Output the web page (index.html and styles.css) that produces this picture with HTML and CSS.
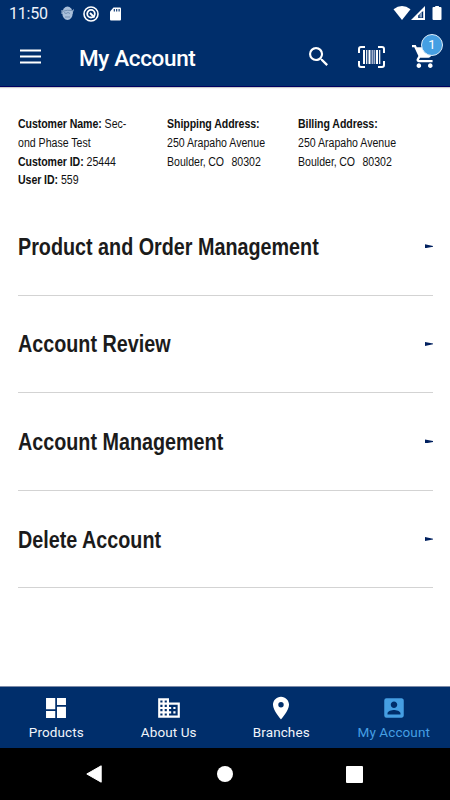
FILE: index.html
```
<!DOCTYPE html>
<html lang="en">
<head>
<meta charset="utf-8">
<title>My Account</title>
<link rel="stylesheet" href="styles.css">
</head>
<body>
<div class="phone">
  <header class="top">
    <div class="status">
      <span class="clock">11:50</span>
      <svg class="robot" viewBox="0 0 13 15"><ellipse cx="6.5" cy="7.3" rx="5.2" ry="6.7" fill="#a9bfda"/><path d="M1 5.5q5-2 11-1M3 6.5l2 1 2-1 2 1M4 11h5" fill="none" stroke="#6583a7" stroke-width=".8"/><path d="M1 4v4M12.5 3.5l-2 5" stroke="#a9bfda"/></svg>
      <svg class="disc" viewBox="0 0 16 16"><circle cx="8" cy="8" r="7" fill="none" stroke="#fff" stroke-width="1.6"/><circle cx="8" cy="7.7" r="3.8" fill="none" stroke="#fff" stroke-width="1.8"/><path d="M7 7l4.5 4.5" stroke="#fff" stroke-width="1.8"/></svg>
      <svg class="sd" viewBox="0 0 12 14"><path d="M4 .5h6.5q1 0 1 1v11q0 1-1 1h-9q-1 0-1-1V4.5z" fill="#fff"/><path d="M4.8 2v2.5M7.2 2v2.5M9.6 2v2.5" stroke="#002e6b" stroke-width="1.1"/></svg>
      <svg class="signals" viewBox="0 0 52 16"><path d="M.5 4.3Q9-2.2 17.5 4.3L9 15z" fill="#fff"/><path d="M32 1v14H18z" fill="#fff"/><path d="M30.2 6v7h-5V10.5z" fill="#002e6b"/><path d="M26.5 12.5V9.5l2.5-3v6z" fill="#849bb9"/><path d="M42.500 1h3q.5 0 .5.7V2h1.500q1 0 1 1v11q0 1-1 1h-7q-1 0-1-1V3q0-1 1-1H42z" fill="#fff"/></svg>
    </div>
    <div class="bar">
      <svg class="menu" viewBox="0 0 21 15"><path d="M0 1.500h21M0 7.500h21M0 13.500h21" stroke="#fff" stroke-width="2.200"/></svg>
      <h1 class="title">My Account</h1>
      <svg class="search" viewBox="3 3 17.500 17.500"><path fill="#fff" d="M15.500 14h-.79l-.28-.27A6.470 6.470 0 0 0 16 9.500 6.500 6.500 0 1 0 9.500 16c1.610 0 3.090-.59 4.230-1.570l.27.28v.79l5 4.990L20.490 19l-4.990-5zm-6 0C7.010 14 5 11.990 5 9.500S7.010 5 9.500 5 14 7.010 14 9.500 11.990 14 9.500 14z"/></svg>
      <svg class="scan" viewBox="0 0 27 22" fill="none" stroke="#fff"><path stroke-width="2" d="M7 1H3Q1 1 1 3v4M20 1h4q2 0 2 2v4M1 15v4q0 2 2 2h4M26 15v4q0 2-2 2h-4"/><path stroke-width="2" d="M6 4v14M11.500 4v14M19 4v14"/><path stroke-width="1.200" d="M8.700 4v14M21.700 4v14"/><path stroke-width="2" stroke="#a0aecb" d="M14.500 4v14"/><path stroke-width="1" stroke="#c1cbdd" d="M16.700 4v14"/></svg>
      <div class="cart">
        <svg viewBox="1 2 21 20"><path fill="#fff" d="M7 18c-1.100 0-1.990.9-1.990 2S5.900 22 7 22s2-.9 2-2-.9-2-2-2zM1 2v2h2l3.600 7.590-1.350 2.450c-.16.28-.25.61-.25.96 0 1.100.9 2 2 2h12v-2H7.420c-.14 0-.25-.11-.25-.25l.03-.12.9-1.630h7.450c.75 0 1.410-.41 1.750-1.030l3.580-6.490A1 1 0 0 0 20 4H5.210l-.94-2H1zm16 16c-1.100 0-1.990.9-1.990 2s.89 2 1.990 2 2-.9 2-2-.9-2-2-2z"/></svg>
        <span class="badge">1</span>
      </div>
    </div>
  </header>
  <main class="content">
    <section class="details">
      <div class="col"><b>Customer Name:</b> Sec-<br>ond Phase Test<br><b>Customer ID:</b> 25444<br><b>User ID:</b> 559</div>
      <div class="col"><b>Shipping Address:</b><br>250 Arapaho Avenue<br><span class="city">Boulder, CO &nbsp;&nbsp;80302</span></div>
      <div class="col"><b>Billing Address:</b><br>250 Arapaho Avenue<br><span class="city">Boulder, CO &nbsp;&nbsp;80302</span></div>
    </section>
    <section class="row"><h2>Product and Order Management</h2><i class="arrow"></i></section>
    <section class="row"><h2>Account Review</h2><i class="arrow"></i></section>
    <section class="row"><h2>Account Management</h2><i class="arrow"></i></section>
    <section class="row"><h2>Delete Account</h2><i class="arrow"></i></section>
  </main>
  <nav class="tabs">
    <div class="tab"><svg viewBox="0 0 24 24"><path d="M2.800 2.800h8.500v10.300H2.800zM12.900 2.800h8.300v6.400h-8.300zM2.800 14.800h8.500v6.400H2.800zM12.900 10.900h8.300v10.300h-8.300z"/></svg><span>Products</span></div>
    <div class="tab"><svg viewBox="0 0 24 24"><path d="M12 7V3H2v18h20V7H12zM6 19H4v-2h2v2zm0-4H4v-2h2v2zm0-4H4V9h2v2zm0-4H4V5h2v2zm4 12H8v-2h2v2zm0-4H8v-2h2v2zm0-4H8V9h2v2zm0-4H8V5h2v2zm10 12h-8v-2h2v-2h-2v-2h2v-2h-2V9h8v10zm-2-8h-2v2h2v-2zm0 4h-2v2h2v-2z"/></svg><span>About Us</span></div>
    <div class="tab"><svg viewBox="0 0 24 24"><path d="M12 1.500C7.800 1.500 4.600 4.900 4.600 9c0 5.500 7.400 13.500 7.400 13.500S19.400 14.500 19.400 9c0-4.100-3.200-7.500-7.400-7.500zm0 10a2.500 2.500 0 0 1 0-5 2.500 2.500 0 0 1 0 5z"/></svg><span>Branches</span></div>
    <div class="tab active"><svg viewBox="0 0 24 24"><path d="M3 5v14a2 2 0 0 0 2 2h14c1.100 0 2-.9 2-2V5c0-1.100-.9-2-2-2H5a2 2 0 0 0-2 2zm12 4c0 1.660-1.340 3-3 3s-3-1.340-3-3 1.340-3 3-3 3 1.340 3 3zm-9 8c0-2 4-3.100 6-3.100s6 1.100 6 3.100v1H6v-1z"/></svg><span>My Account</span></div>
  </nav>
  <footer class="system">
    <svg viewBox="0 0 16 18"><path d="M15.200.8v16.400L.8 9z" fill="#fff" stroke="#fff" stroke-linejoin="round"/></svg>
    <i class="home"></i>
    <i class="recent"></i>
  </footer>
</div>
</body>
</html>
```
FILE: styles.css
```
* { box-sizing: border-box; }
body { margin: 0; background: #fff; font-family: Roboto, sans-serif; }
svg { display: block; flex: none; overflow: visible; }
.phone { width: 450px; height: 800px; display: flex; flex-direction: column; overflow: hidden; }
.top { height: 87px; background: #002e6b; border-bottom: 1px solid #00005f; color: #fff; flex: none; box-shadow: 0 1px 1px #ccc; }
.status { height: 27px; display: flex; align-items: center; padding-left: 9px; }
.clock { font-size: 16px; width: 52px; letter-spacing: -0.2px; color: #edf2fa; }
.robot { width: 13px; height: 15px; }
.disc { width: 16px; height: 16px; margin-left: 9px; }
.sd { width: 13px; height: 14px; margin-left: 10px; }
.signals { width: 52px; height: 16px; margin-left: auto; margin-right: 5px; margin-top: -1px; }
.bar { height: 60px; display: flex; align-items: center; padding: 0 14px 1px 20px; }
.menu { width: 21px; height: 15px; }
.title { margin: 3px 0 0 38px; font-size: 22.500px; font-weight: 500; line-height: 28px; width: 230px; letter-spacing: -0.350px; }
.search { width: 19px; height: 19px; }
.scan { width: 27px; height: 22px; margin-left: 30px; }
.cart { margin-left: auto; position: relative; }
.cart svg { width: 24px; height: 23px; }
.badge { position: absolute; left: 9px; top: -11px; width: 22px; height: 22px; border-radius: 50%; border: 1px solid #dcecf9; background: #459fe3; font-size: 13px; line-height: 20px; text-align: center; }
.content { flex: 1; padding: 28px 17px 0 18px; font-family: "Liberation Sans", sans-serif; }
.details { display: grid; grid-template-columns: 149px 131px 1fr; height: 83px; font-size: 12.500px; line-height: 18.800px; color: #111; white-space: nowrap; }
.col { transform: scaleX(.846); transform-origin: left top; }
.col b { letter-spacing: -0.080px; }
.city { word-spacing: -0.600px; }
.row { height: 97.600px; border-bottom: 1px solid #d3d3d3; display: flex; align-items: center; justify-content: space-between; }
.row h2 { margin: 1px 0 0; font-size: 24px; line-height: 30px; color: #1b1b1b; white-space: nowrap; transform: scaleX(.823); transform-origin: left center; }
.arrow { width: 8px; height: 4px; background: #00205f; clip-path: polygon(0 0, 100% 40%, 100% 60%, 0 100%); }
.tabs { height: 62px; flex: none; background: #002e6b; border-top: 1px solid #7d8ba8; display: grid; grid-template-columns: repeat(4, 112.500px); }
.tab { display: flex; flex-direction: column; align-items: center; color: #f1f4fa; font-size: 13.500px; letter-spacing: .1px; padding-top: 8px; }
.tab svg { width: 26px; height: 26px; fill: #fff; }
.tab span { line-height: 16px; margin-top: 3px; }
.tab.active { color: #459fe3; }
.tab.active svg { fill: #459fe3; }
.system { height: 52px; flex: none; background: #000; display: flex; align-items: center; padding-left: 86px; }
.system svg { width: 16px; height: 18px; }
.home { width: 16px; height: 16px; border-radius: 50%; background: #fff; margin-left: 115px; }
.recent { width: 17px; height: 17px; border-radius: 1px; background: #fff; margin-left: 113px; }
```
